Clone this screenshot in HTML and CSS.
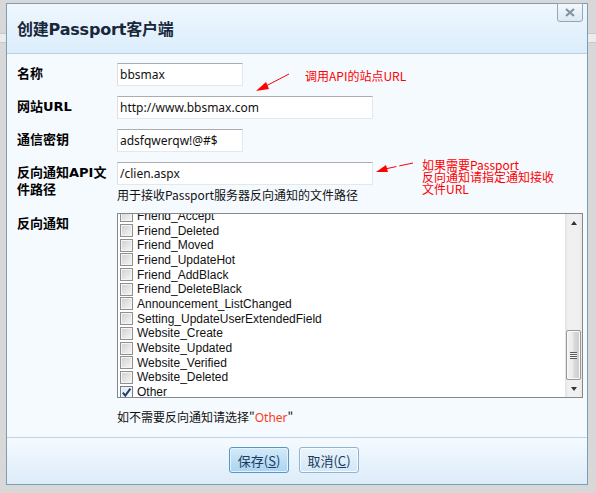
FILE: index.html
```html
<!DOCTYPE html>
<html lang="zh-CN">
<head>
<meta charset="utf-8">
<title>创建Passport客户端</title>
<link rel="stylesheet" href="styles.css">
</head>
<body>
<div class="page-bg"></div>
<div class="dialog">
  <div class="dlg-head">
    <h1 class="dlg-title">创建Passport客户端</h1>
    <button class="dlg-close" type="button" aria-label="关闭">
      <svg width="12" height="9" viewBox="0 0 12 9"><path d="M2 1 L10 8 M10 1 L2 8" stroke="#7f94a3" stroke-width="2.2" fill="none"/></svg>
    </button>
  </div>
  <div class="dlg-body">
    <div class="row">
      <label class="lbl">名称</label>
      <div class="field"><input class="txt short" type="text" value="bbsmax"></div>
    </div>
    <div class="row">
      <label class="lbl">网站URL</label>
      <div class="field"><input class="txt long" type="text" value="http://www.bbsmax.com"></div>
    </div>
    <div class="row">
      <label class="lbl">通信密钥</label>
      <div class="field"><input class="txt short" type="text" value="adsfqwerqw!@#$"></div>
    </div>
    <div class="row">
      <label class="lbl">反向通知API文件路径</label>
      <div class="field">
        <input class="txt long" type="text" value="/clien.aspx">
        <p class="help">用于接收Passport服务器反向通知的文件路径</p>
      </div>
    </div>
    <div class="row">
      <label class="lbl">反向通知</label>
      <div class="field">
        <div class="listbox">
          <div class="list-view">
            <ul class="list">
              <li><span class="cb"></span>Friend_Accept</li>
              <li><span class="cb"></span>Friend_Deleted</li>
              <li><span class="cb"></span>Friend_Moved</li>
              <li><span class="cb"></span>Friend_UpdateHot</li>
              <li><span class="cb"></span>Friend_AddBlack</li>
              <li><span class="cb"></span>Friend_DeleteBlack</li>
              <li><span class="cb"></span>Announcement_ListChanged</li>
              <li><span class="cb"></span>Setting_UpdateUserExtendedField</li>
              <li><span class="cb"></span>Website_Create</li>
              <li><span class="cb"></span>Website_Updated</li>
              <li><span class="cb"></span>Website_Verified</li>
              <li><span class="cb"></span>Website_Deleted</li>
              <li><span class="cb checked"><svg width="11" height="11" viewBox="0 0 11 11"><path d="M1.8 5.6 L4.3 8.6 L9.4 1.6" stroke="#22406a" stroke-width="2" fill="none"/></svg></span>Other</li>
            </ul>
          </div>
          <div class="vscroll">
            <div class="sb-btn"><span class="tri up"></span></div>
            <div class="sb-track">
              <div class="sb-thumb"><span class="grip"></span></div>
            </div>
            <div class="sb-btn"><span class="tri down"></span></div>
          </div>
        </div>
        <p class="note">如不需要反向通知请选择"<span class="hl">Other</span>"</p>
      </div>
    </div>
  </div>
  <div class="dlg-foot">
    <button class="btn primary" type="button">保存(<u>S</u>)</button>
    <button class="btn" type="button">取消(<u>C</u>)</button>
  </div>

  <svg class="annot-arrows" width="580" height="480" viewBox="0 0 580 480">
    <line x1="282" y1="70" x2="256" y2="83.5" stroke="#ff0000" stroke-width="1"/>
    <polygon points="249,87 259,78 262,85" fill="#ff0000"/>
    <line x1="406" y1="159" x2="378" y2="165" stroke="#ff0000" stroke-width="1" stroke-dasharray="14 3"/>
    <polygon points="369,168 379,161 381,168" fill="#ff0000"/>
  </svg>
  <div class="annot a1">调用API的站点URL</div>
  <div class="annot a2">
    <div class="ln">如果需要Passport</div>
    <div class="ln">反向通知请指定通知接收</div>
    <div class="ln">文件URL</div>
  </div>
</div>
</body>
</html>
```

FILE: styles.css
```css
html, body {
  margin: 0;
  padding: 0;
}
body {
  width: 596px;
  height: 493px;
  overflow: hidden;
  background: #d8d8d8;
  font-family: "Noto Sans", "Noto Sans CJK SC", sans-serif;
  font-size: 12px;
  color: #111;
  position: relative;
}
.page-bg {
  position: absolute;
  left: 0;
  top: 0;
  width: 596px;
  height: 493px;
  background:
    linear-gradient(#d8d8d8 0 33px, #c9c9c9 33px 34px, #ececec 34px 42px, #c9c9c9 42px 43px, transparent 43px);
}
.dialog {
  position: relative;
  margin: 3px 0 0 6px;
  width: 582px;
  height: 482px;
  box-sizing: border-box;
  border: 1px solid #7d9db1;
  background: #f5faff;
  display: flex;
  flex-direction: column;
}
.dlg-head {
  position: relative;
  height: 50px;
  box-sizing: border-box;
  border-bottom: 1px solid #b8d0e2;
  background: linear-gradient(#eff7fe, #dbedfb);
  display: flex;
  align-items: center;
  padding: 0 0 2px 10px;
}
.dlg-title {
  margin: 0;
  font-family: "DejaVu Sans", "Noto Sans CJK SC", sans-serif;
  font-size: 16px;
  font-weight: bold;
  color: #18273a;
  letter-spacing: -0.2px;
}
.dlg-close {
  position: absolute;
  right: 4px;
  top: -1px;
  width: 26px;
  height: 19px;
  padding: 0;
  box-sizing: border-box;
  border: 1px solid #8fa8bb;
  border-radius: 0 0 3px 3px;
  background: linear-gradient(#f4f9fd, #dde9f2);
  display: flex;
  align-items: center;
  justify-content: center;
}
.dlg-body {
  flex: 1;
  padding: 9px 0 0 10px;
}
.row {
  display: flex;
  margin-bottom: 10px;
}
.lbl {
  width: 100px;
  box-sizing: border-box;
  padding: 2px 3px 0 0;
  font-family: "DejaVu Sans", "Noto Sans CJK SC", sans-serif;
  font-size: 13px;
  font-weight: bold;
  line-height: 17px;
  color: #000;
}
.field {
  display: flex;
  flex-direction: column;
}
.txt {
  display: block;
  height: 23px;
  box-sizing: border-box;
  margin: 0;
  padding: 0 2px;
  border: 1px solid #e2e8ee;
  border-top-color: #abadb3;
  border-left-color: #dbdfe6;
  background: #fff;
  font-family: "Noto Sans", "Noto Sans CJK SC", sans-serif;
  font-size: 12px;
  color: #111;
  outline: none;
}
.txt.short { width: 126px; }
.txt.long { width: 256px; }
.help {
  margin: 2px 0 0;
  line-height: 16px;
  font-family: "Noto Sans CJK SC", sans-serif;
  font-size: 12px;
  color: #111;
}
.listbox {
  width: 466px;
  height: 185px;
  box-sizing: border-box;
  border: 1px solid #828790;
  background: #fff;
  display: flex;
}
.list-view {
  flex: 1;
  overflow: hidden;
}
.list {
  list-style: none;
  margin: -5.5px 0 0;
  padding: 0 0 0 2px;
}
.list li {
  height: 14.7px;
  display: flex;
  align-items: center;
  white-space: nowrap;
  font-family: "Liberation Sans", "Noto Sans", sans-serif;
  font-size: 12px;
  line-height: 14px;
  color: #111;
}
.cb {
  width: 13px;
  height: 13px;
  box-sizing: border-box;
  flex: none;
  margin-right: 4px;
  border: 1px solid #8e8f8f;
  box-shadow: inset 0 0 0 1px #f4f4f4;
  background: linear-gradient(135deg, #cfcfcf, #f7f7f7);
  display: flex;
  align-items: center;
  justify-content: center;
}
.cb.checked {
  border-color: #6a7e94;
  background: linear-gradient(135deg, #dfe6ee, #fbfcfd);
}
.vscroll {
  width: 17px;
  flex: none;
  display: flex;
  flex-direction: column;
  background: linear-gradient(to right, #e3e3e3, #f0f0f0 20%, #f0f0f0 80%, #e8e8e8);
}
.sb-btn {
  height: 17px;
  display: flex;
  align-items: center;
  justify-content: center;
}
.tri {
  width: 0;
  height: 0;
  border-left: 3.5px solid transparent;
  border-right: 3.5px solid transparent;
}
.tri.up { border-bottom: 4px solid #333; }
.tri.down { border-top: 4px solid #333; }
.sb-track {
  flex: 1;
  display: flex;
  flex-direction: column;
  justify-content: flex-end;
}
.sb-thumb {
  height: 50px;
  margin: 0 1px;
  box-sizing: border-box;
  border: 1px solid #979797;
  border-radius: 2px;
  background: linear-gradient(to right, #f4f4f4, #e9e9e9 45%, #d8d8d8 55%, #cdcdcd);
  box-shadow: inset 0 0 0 1px #fafafa;
  display: flex;
  align-items: center;
  justify-content: center;
}
.grip {
  width: 7px;
  height: 7px;
  background: repeating-linear-gradient(#5a5a5a 0 1px, #f4f4f4 1px 2px);
}
.note {
  margin: 11px 0 0;
  line-height: 16px;
  font-family: "Noto Sans CJK SC", sans-serif;
  font-size: 12px;
  color: #111;
}
.note .hl {
  font-family: "Noto Sans", sans-serif;
  color: #ff3a1a;
}
.dlg-foot {
  height: 47px;
  box-sizing: border-box;
  border-top: 1px solid #c0d4e3;
  background: linear-gradient(#f5faff, #dcecf9);
  display: flex;
  justify-content: center;
  align-items: flex-start;
  gap: 10px;
  padding: 9px 6px 0 0;
}
.btn {
  width: 60px;
  height: 26px;
  box-sizing: border-box;
  padding: 0;
  border: 1px solid #8fb4cf;
  border-radius: 3px;
  background: linear-gradient(#eaf5fd, #d2e7f7);
  box-shadow: inset 0 0 0 1px #f6fbff;
  font-family: "Noto Sans CJK SC", sans-serif;
  font-size: 13px;
  color: #1c3a5c;
}
.btn.primary {
  border-color: #5e95bf;
  background: linear-gradient(#d2eafa, #a9d5f2);
  box-shadow: inset 0 0 0 1px #e3f2fc;
}
.annot-arrows {
  position: absolute;
  left: 0;
  top: 0;
  pointer-events: none;
}
.annot {
  position: absolute;
  font-family: "Noto Sans CJK SC", sans-serif;
  font-size: 12px;
  color: #ff0000;
  white-space: nowrap;
}
.annot.a1 {
  left: 298px;
  top: 66px;
  line-height: 12px;
}
.annot.a2 {
  left: 415px;
  top: 155px;
}
.annot.a2 .ln {
  height: 12px;
  line-height: 12px;
}
```
